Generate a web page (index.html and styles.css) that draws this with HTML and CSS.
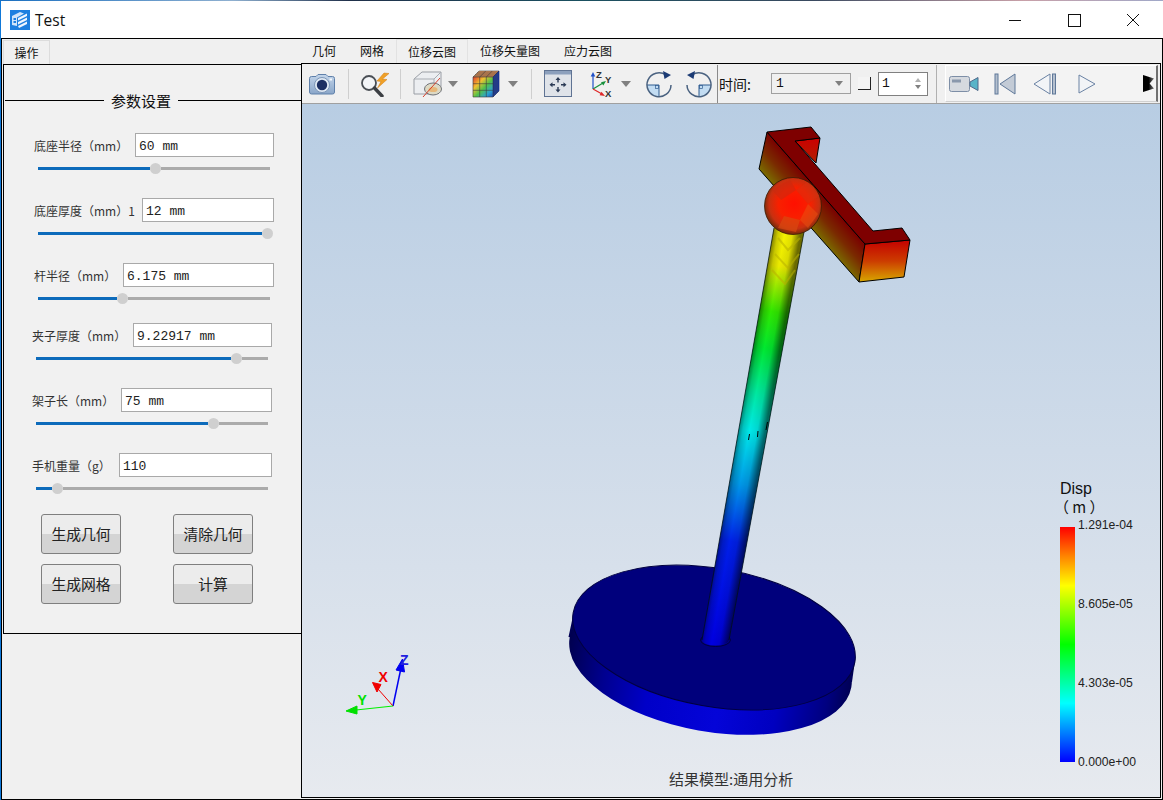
FILE: index.html
```html
<!DOCTYPE html>
<html lang="zh">
<head>
<meta charset="utf-8">
<title>Test</title>
<link rel="stylesheet" href="styles.css">
</head>
<body>
<div class="desktop-strip"></div>
<div class="window">
  <header class="titlebar">
    <svg class="app-logo" width="20" height="20" viewBox="0 0 20 20">
      <rect width="20" height="20" fill="#1c7fe0"/>
      <path d="M2 6 L10 2 L14 3.5 L7 7.5 L7 16 L2 15 Z" fill="#cfe4fa"/>
      <path d="M8 8 L17 3.5 L17 6 L8 10.5 Z M8 12 L17 7.5 L17 10 L8 14.5 Z M8 16 L17 11.5 L17 14 L9 18 Z" fill="#eef6ff"/>
      <path d="M3.5 8 H6 V10 H3.5 Z M3.5 11 H6 V13 H3.5 Z" fill="#1c7fe0"/>
    </svg>
    <span class="app-title">Test</span>
    <div class="win-controls">
      <svg width="59" height="24" viewBox="0 0 59 24"><path d="M22 12.500 H34" stroke="#111" fill="none"/></svg>
      <svg width="59" height="24" viewBox="0 0 59 24"><rect x="22.500" y="6.500" width="12" height="12" stroke="#111" fill="none"/></svg>
      <svg width="59" height="24" viewBox="0 0 59 24"><path d="M22 6 L34 18 M34 6 L22 18" stroke="#111" fill="none"/></svg>
    </div>
  </header>

  <main class="client">
    <section class="left">
      <div class="left-tabs"><div class="left-tab">操作</div></div>
      <div class="left-pane">
        <div class="group-title"><span class="rule rule-l"></span><span class="group-name">参数设置</span><span class="rule"></span></div>

        <div class="param-group group-a">
          <div class="param">
            <div class="param-line"><span class="param-label">底座半径（mm）</span><div class="field w139">60 mm</div></div>
            <div class="slider"><span class="fill" style="width:112px"></span><span class="thumb"></span><span class="rest"></span></div>
          </div>
          <div class="param">
            <div class="param-line"><span class="param-label">底座厚度（mm）</span><span class="param-extra">1</span><div class="field w132">12 mm</div></div>
            <div class="slider"><span class="fill" style="width:224px"></span><span class="thumb"></span><span class="rest"></span></div>
          </div>
          <div class="param">
            <div class="param-line"><span class="param-label">杆半径（mm）</span><div class="field w151">6.175 mm</div></div>
            <div class="slider"><span class="fill" style="width:79px"></span><span class="thumb"></span><span class="rest"></span></div>
          </div>
        </div>

        <div class="param-group group-b">
          <div class="param">
            <div class="param-line"><span class="param-label">夹子厚度（mm）</span><div class="field w139">9.22917 mm</div></div>
            <div class="slider"><span class="fill" style="width:195px"></span><span class="thumb"></span><span class="rest"></span></div>
          </div>
          <div class="param">
            <div class="param-line"><span class="param-label">架子长（mm）</span><div class="field w151">75 mm</div></div>
            <div class="slider"><span class="fill" style="width:172px"></span><span class="thumb"></span><span class="rest"></span></div>
          </div>
          <div class="param">
            <div class="param-line"><span class="param-label">手机重量（g）</span><div class="field w153">110</div></div>
            <div class="slider"><span class="fill" style="width:16px"></span><span class="thumb"></span><span class="rest"></span></div>
          </div>
        </div>

        <div class="actions">
          <button class="btn">生成几何</button>
          <button class="btn">清除几何</button>
          <button class="btn">生成网格</button>
          <button class="btn">计算</button>
        </div>
      </div>
    </section>

    <section class="right">
      <nav class="tabs">
        <span class="tab">几何</span>
        <span class="tab">网格</span>
        <span class="tab tab-active">位移云图</span>
        <span class="tab">位移矢量图</span>
        <span class="tab">应力云图</span>
      </nav>
      <div class="right-pane">
        <div class="toolbar">
          <svg class="ico m-cam" width="28" height="24" viewBox="0 0 28 24">
            <defs><linearGradient id="camB" x1="0" y1="0" x2="0" y2="1"><stop offset="0" stop-color="#c3d5ea"/><stop offset="1" stop-color="#8aa6c9"/></linearGradient></defs>
            <path d="M1.500 6.500 Q1.500 4.500 3.500 4.500 H8 L10 2.500 H18 L20 4.500 H24.500 Q26.500 4.500 26.500 6.500 V20 Q26.500 22 24.500 22 H3.500 Q1.500 22 1.500 20 Z" fill="url(#camB)" stroke="#5f80aa"/>
            <circle cx="14" cy="13" r="7.500" fill="#dfe9f4" stroke="#7e97b8"/>
            <circle cx="14" cy="13" r="5.200" fill="#1c2f63"/>
            <rect x="21.500" y="6.500" width="2.500" height="2" fill="#f4f8fc"/>
          </svg>
          <span class="sep m-s1"></span>
          <svg class="ico m-mag" width="30" height="26" viewBox="0 0 30 26">
            <circle cx="8" cy="12" r="7" fill="#f3f5f8" stroke="#4a4f55" stroke-width="1.800"/>
            <path d="M13.500 17 L21 25" stroke="#3c3f44" stroke-width="3.400" stroke-linecap="round"/>
            <path d="M23 2 L16 10 L20 10.500 L16.500 17 L26 8.500 L21.500 8 L28 2.500 Z" fill="#f0a127" stroke="#d07b10" stroke-width=".5"/>
          </svg>
          <span class="sep m-s2"></span>
          <svg class="ico m-box" width="30" height="28" viewBox="0 0 30 28">
            <path d="M1 9 L9 2 H28 V16 L22 24 H1 Z" fill="#eceef1" stroke="#9a9ea5"/>
            <path d="M1 9 H21 V24 M21 9 L28 2" fill="none" stroke="#a8acb2"/>
            <ellipse cx="20" cy="19" rx="8.500" ry="6" fill="#dcd9c5" stroke="#6f7278"/>
            <ellipse cx="20" cy="19.500" rx="4.500" ry="2.600" fill="#e6b77a"/>
            <path d="M10 27 L27 8" stroke="#d8402b"/>
          </svg>
          <span class="tri m-t1"></span>
          <svg class="ico m-cube" width="28" height="28" viewBox="0 0 28 28">
            <defs><linearGradient id="rb" x1="0" y1="0" x2="1" y2="1"><stop offset="0" stop-color="#e03a2e"/><stop offset=".3" stop-color="#f0c030"/><stop offset=".55" stop-color="#52c24a"/><stop offset=".8" stop-color="#2aa0d0"/><stop offset="1" stop-color="#2050c0"/></linearGradient></defs>
            <path d="M1 7 L7 1 H27 L21 7 Z" fill="#d88c54" stroke="#444" stroke-width=".6"/>
            <path d="M21 7 L27 1 V21 L21 27 Z" fill="#1c3ea8" stroke="#102060" stroke-width=".6"/>
            <rect x="1" y="7" width="20" height="20" fill="url(#rb)"/>
            <path d="M1 7 H21 V27 H1 Z M7.700 7 V27 M14.300 7 V27 M1 13.700 H21 M1 20.300 H21 M7.700 7 L13.700 1 M14.300 7 L20.300 1 M3 5 H23 M5 3 H25 M23 5 V25 M25 3 V23" fill="none" stroke="#3b3b3b" stroke-width=".6"/>
          </svg>
          <span class="tri m-t2"></span>
          <span class="sep m-s3"></span>
          <svg class="ico m-fit" width="28" height="27" viewBox="0 0 28 27">
            <rect x=".5" y=".5" width="27" height="26" fill="#dfe3e9" stroke="#5f7393"/>
            <rect x="1" y="1" width="26" height="3.500" fill="#8ca0bd"/>
            <path d="M14 7 L11.500 10 H13.300 V12.500 H14.700 V10 H16.500 Z M14 22.500 L11.500 19.500 H13.300 V17 H14.700 V19.500 H16.500 Z M5.500 14.700 L8.500 12.200 V14 H11 V15.400 H8.500 V17.200 Z M22.500 14.700 L19.500 12.200 V14 H17 V15.400 H19.500 V17.200 Z" fill="#2b3a55"/>
          </svg>
          <svg class="ico m-axes" width="24" height="28" viewBox="0 0 24 28">
            <path d="M4 19 V5" stroke="#2050c8" stroke-width="1.200"/><path d="M4 2 L1.700 6.500 H6.300 Z" fill="#2050c8"/>
            <path d="M4 19 L14 13" stroke="#18903c" stroke-width="1.200"/><path d="M17 11 L12 12.200 L14.300 15.500 Z" fill="#18903c"/>
            <path d="M4 19 L13 24" stroke="#e02828" stroke-width="1.200"/><path d="M16 26 L12.500 21.800 L10.600 25.200 Z" fill="#e02828"/>
            <text class="axis-mini" x="7" y="8">Z</text><text class="axis-mini" x="16" y="13">Y</text><text class="axis-mini" x="16" y="27">X</text>
          </svg>
          <span class="tri m-t3"></span>
          <svg class="ico m-rot1" width="26" height="28" viewBox="0 0 26 28">
            <path d="M13 15 V27 A12 12 0 0 1 1 15 Z" fill="#c2dcf2"/>
            <path d="M1 15 H13 V27" stroke="#2f5c90" fill="none"/>
            <rect x="9.500" y="15.500" width="3" height="3" fill="none" stroke="#2f5c90" stroke-width=".7"/>
            <path d="M20 5 A12 12 0 1 0 25 15" fill="none" stroke="#4a6280" stroke-width="1.500"/>
            <path d="M25 5 L17 1 L18.500 9 Z" fill="#1c3b74"/>
          </svg>
          <svg class="ico m-rot2" width="26" height="28" viewBox="0 0 26 28">
            <path d="M13 15 V27 A12 12 0 0 0 25 15 Z" fill="#c2dcf2"/>
            <path d="M13 27 V15 H25" stroke="#2f5c90" fill="none"/>
            <rect x="13.500" y="15.500" width="3" height="3" fill="none" stroke="#2f5c90" stroke-width=".7"/>
            <path d="M6 5 A12 12 0 1 1 1 15" fill="none" stroke="#4a6280" stroke-width="1.500"/>
            <path d="M1 5 L9 1 L7.500 9 Z" fill="#1c3b74"/>
          </svg>
          <span class="sep sep-dark m-s4"></span>
          <span class="time-label">时间:</span>
          <div class="combo"><span>1</span><span class="tri tri-sm"></span></div>
          <span class="check"></span>
          <div class="spin"><span>1</span><span class="spin-arrows"><i class="up"></i><i class="down"></i></span></div>
          <span class="sep m-s5"></span>
          <div class="player">
            <svg class="p-rec" width="30" height="18" viewBox="0 0 30 18">
              <rect x=".5" y="1.500" width="20" height="15" rx="2" fill="#d5d9df" stroke="#7d8ea6"/>
              <rect x="3" y="4.500" width="9" height="3" fill="#8a98ac"/>
              <path d="M21 7 L29 2.500 V15.500 L21 11 Z" fill="#59b4c8" stroke="#51688a"/>
            </svg>
            <svg class="p-first" width="22" height="22" viewBox="0 0 22 22">
              <rect x="1" y="1" width="3" height="20" fill="#b4bfce" stroke="#5f7899"/>
              <path d="M21 1 V21 L6 11 Z" fill="#c3cbd6" stroke="#5f7899"/>
            </svg>
            <svg class="p-back" width="24" height="22" viewBox="0 0 24 22">
              <path d="M17 1 V21 L1 11 Z" fill="#f2f4f7" stroke="#6a82a3"/>
              <rect x="19.500" y="1" width="3" height="20" fill="#b4bfce" stroke="#5f7899"/>
            </svg>
            <svg class="p-play" width="18" height="20" viewBox="0 0 18 20">
              <path d="M1 1 V19 L17 10 Z" fill="#f2f4f7" stroke="#6a82a3"/>
            </svg>
            <span class="p-more"></span>
          </div>
        </div>

        <div class="viewport">
          <svg class="scene" viewBox="302 104 858 693" width="858" height="693">
            <defs>
              <linearGradient id="wall" gradientUnits="userSpaceOnUse" x1="568" y1="0" x2="855" y2="0">
                <stop offset="0" stop-color="#000050"/><stop offset=".14" stop-color="#000090"/><stop offset=".3" stop-color="#0000c8"/><stop offset=".55" stop-color="#0404d8"/><stop offset=".75" stop-color="#0000c0"/><stop offset=".92" stop-color="#000080"/><stop offset="1" stop-color="#000050"/>
              </linearGradient>
              <linearGradient id="rodC" gradientUnits="userSpaceOnUse" x1="790" y1="230" x2="715" y2="640">
                <stop offset="0" stop-color="#f6f200"/><stop offset=".09" stop-color="#eaea00"/><stop offset=".2" stop-color="#30e800"/><stop offset=".29" stop-color="#00e830"/><stop offset=".4" stop-color="#00e8a0"/><stop offset=".49" stop-color="#00e8e8"/><stop offset=".62" stop-color="#0098e8"/><stop offset=".76" stop-color="#0020e8"/><stop offset="1" stop-color="#0000e0"/>
              </linearGradient>
              <linearGradient id="rodS" gradientUnits="userSpaceOnUse" x1="737" y1="427.500" x2="765" y2="432.500">
                <stop offset="0" stop-color="#000" stop-opacity=".55"/><stop offset=".22" stop-color="#000" stop-opacity=".16"/><stop offset=".45" stop-color="#000" stop-opacity="0"/><stop offset=".72" stop-color="#000" stop-opacity=".08"/><stop offset="1" stop-color="#000" stop-opacity=".55"/>
              </linearGradient>
              <linearGradient id="faceA" gradientUnits="userSpaceOnUse" x1="820" y1="192.500" x2="797" y2="212.500">
                <stop offset="0" stop-color="#7a0000"/><stop offset=".5" stop-color="#7a2a00"/><stop offset="1" stop-color="#7a6c00"/>
              </linearGradient>
              <linearGradient id="faceE" x1="0" y1="0" x2="0" y2="1">
                <stop offset="0" stop-color="#c40000"/><stop offset=".5" stop-color="#cc3c00"/><stop offset="1" stop-color="#d8a800"/>
              </linearGradient>
              <linearGradient id="faceI" x1="0" y1="0" x2="0" y2="1">
                <stop offset="0" stop-color="#cc0000"/><stop offset="1" stop-color="#b02000"/>
              </linearGradient>
              <radialGradient id="ball" cx=".52" cy=".46" r=".55">
                <stop offset="0" stop-color="#ff1000"/><stop offset=".5" stop-color="#f82000"/><stop offset=".8" stop-color="#c83010"/><stop offset="1" stop-color="#6a2a08"/>
              </radialGradient>
            </defs>

            <!-- base plate -->
            <path d="M573 616 L568.500 637 L852 682 L855.500 657 Z" fill="url(#wall)"/>
            <ellipse cx="710.500" cy="662.500" rx="143" ry="69" transform="rotate(10 710.500 662.500)" fill="url(#wall)"/>
            <ellipse cx="714" cy="637.500" rx="143" ry="69" transform="rotate(10 714 637.500)" fill="#00007c" stroke="#000040"/>

            <!-- rod -->
            <ellipse cx="715.500" cy="640" rx="15" ry="6.500" fill="none" stroke="#000040"/>
            <path d="M774 228 L804 232 L729 640 A13.500 5.500 0 0 1 702 640 Z" fill="url(#rodC)"/>
            <path d="M774 228 L804 232 L729 640 A13.500 5.500 0 0 1 702 640 Z" fill="url(#rodS)"/>
            <path d="M774 228 L702 640 M804 232 L729 640" stroke="#001010" stroke-opacity=".75" fill="none"/>
            <path d="M749.500 434 L748.500 440 M758 431 L757.500 437 M767.500 422 L766 430" stroke="#000" fill="none"/>
            <path d="M778 238 L788 250 L800 238 M775 254 L788 268 L799 254 M772 270 L785 284 L795 270" fill="none" stroke="#b8b000" stroke-opacity=".55" stroke-width="2"/>

            <!-- clamp -->
            <path d="M795 141 L820 138 L816 163 Z" fill="url(#faceI)" stroke="#000"/>
            <path d="M767 132 L865 244 L859 282 L759 169 Z" fill="url(#faceA)" stroke="#000"/>
            <path d="M865 244 L910 240 L904 277 L859 282 Z" fill="url(#faceE)" stroke="#000"/>
            <path d="M767 132 L811 127 L820 138 L795 141 L873 231 L902 228 L910 240 L865 244 Z" fill="#7e0000" stroke="#000"/>

            <!-- ball -->
            <circle cx="793" cy="206" r="28.500" fill="url(#ball)" stroke="#3c1a04" stroke-width=".8"/>
            <path d="M772 190 L790 180 L796 190 L781 200 Z" fill="#c82a10" fill-opacity=".55"/>
            <path d="M796 190 L807 182 L819 196 L808 204 Z" fill="#d83010" fill-opacity=".5"/>
            <path d="M784 216 L800 220 L796 232 L778 228 Z" fill="#d84810" fill-opacity=".7"/>
            <path d="M800 220 L808 204 L818 214 L808 228 Z" fill="#e85010" fill-opacity=".55"/>

            <!-- triad -->
            <path d="M393 706 L401 668" stroke="#0000f0" stroke-width="1.500"/>
            <path d="M402.500 659 L396 670 L404.500 672 Z" fill="#0000f0" stroke="#0000f0"/>
            <text class="triad" x="400" y="665" fill="#2020e0">Z</text>
            <path d="M393 706 L378 689" stroke="#f00000"/>
            <path d="M372.500 682.500 L381 684.500 L377 692 Z" fill="#f00000" stroke="#f00000"/>
            <text class="triad" x="378.500" y="682" fill="#f00000">X</text>
            <path d="M393 706 L356 710" stroke="#00f000" stroke-width="1.200"/>
            <path d="M346 711 L357 706 L357 714 Z" fill="#00e000" stroke="#00e000"/>
            <text class="triad" x="357.500" y="705" fill="#00e000">Y</text>
          </svg>

          <div class="legend">
            <div class="legend-title">Disp</div>
            <div class="legend-unit">（ m ）</div>
            <div class="legend-body">
              <div class="legend-bar"></div>
              <ul class="legend-ticks">
                <li>1.291e-04</li>
                <li>8.605e-05</li>
                <li>4.303e-05</li>
                <li>0.000e+00</li>
              </ul>
            </div>
          </div>
          <div class="caption">结果模型:通用分析</div>
        </div>
      </div>
    </section>
  </main>
</div>
</body>
</html>
```
FILE: styles.css
```css
* { box-sizing: border-box; }
html, body { margin: 0; padding: 0; }
body {
  width: 1163px;
  height: 800px;
  overflow: hidden;
  background: #f0f0f0;
  font-family: "Noto Sans CJK SC", "Noto Sans", sans-serif;
  color: #111;
}
.desktop-strip {
  height: 1px;
  background: linear-gradient(90deg, #1a6fc0 0, #8fb0d0 20%, #20304a 30%, #1a5060 50%, #3a4a60 70%, #c8a0a8 88%, #a0a8c8 100%);
}
.window {
  height: 799px;
  border-left: 1px solid #0f78d8;
  display: flex;
  flex-direction: column;
}

/* title bar */
.titlebar {
  height: 37px;
  flex: none;
  background: #fff;
  display: flex;
  align-items: center;
  padding-left: 9px;
}
.app-logo { flex: none; }
.app-title {
  margin-left: 5px;
  font: 15.500px "Open Sans", "Noto Sans", sans-serif;
  color: #111;
}
.win-controls { margin-left: auto; margin-right: -1px; display: flex; }
.win-controls svg { display: block; }

/* client */
.client {
  flex: 1;
  display: flex;
  border: 1px solid #000;
  background: #f0f0f0;
  min-height: 0;
}
.left { width: 299px; flex: none; display: flex; flex-direction: column; }
.left-tabs { height: 25px; padding: 1px 0 0 1px; flex: none; }
.left-tab {
  width: 47px;
  height: 24px;
  background: #f0f0f0;
  border: 1px solid #dcdcdc;
  border-bottom: 0;
  font-size: 12px;
  line-height: 24px;
  text-align: center;
}
.left-pane {
  margin-left: 1px;
  height: 570px;
  border: 1px solid #000;
  border-right: 0;
  background: #f1f1f1;
}

.group-title {
  display: flex;
  align-items: center;
  height: 22px;
  margin-top: 24px;
  padding-left: 1px;
}
.rule { flex: 1; height: 1px; background: #000; }
.rule-l { flex: none; width: 99px; }
.group-name { width: 74px; text-align: center; font-size: 15px; }

.param-group { display: flex; flex-direction: column; gap: 24px; width: 240px; }
.group-a { margin: 22px 0 0 30px; }
.group-b { margin: 19px 0 0 28px; }
.param { display: flex; flex-direction: column; gap: 6px; }
.param-line { display: flex; align-items: center; height: 24px; }
.param-label { font-size: 12px; color: #333; white-space: nowrap; }
.param-extra { font-size: 12px; color: #333; }
.field {
  margin-left: auto;
  height: 24px;
  flex: none;
  background: #fff;
  border: 1px solid #a9a9a9;
  padding: 2px 0 0 3px;
  font: 13px/22px "Liberation Mono", monospace;
  color: #222;
}
.w139 { width: 139px; }
.w132 { width: 132px; }
.w151 { width: 151px; }
.w153 { width: 153px; }

.slider { display: flex; align-items: center; height: 11px; margin: 0 4px; }
.fill { height: 3px; background: #0d6bbb; display: block; flex: none; }
.rest { height: 3px; background: #ababab; display: block; flex: 1; }
.thumb { width: 11px; height: 11px; border-radius: 50%; background: #cfcfcf; flex: none; display: block; }

.actions {
  display: grid;
  grid-template-columns: 80px 80px;
  grid-auto-rows: 40px;
  column-gap: 52px;
  row-gap: 10px;
  margin: 20px 0 0 37px;
}
.btn {
  padding: 0 0 2px;
  border: 1px solid #7f7f7f;
  border-radius: 3px;
  background: linear-gradient(180deg, #ececec 0, #ececec 50%, #d4d4d4 50%, #d4d4d4 100%);
  font: 14.800px "Noto Sans CJK SC", sans-serif;
  color: #222;
}

/* right */
.right { flex: 1; display: flex; flex-direction: column; min-width: 0; padding: 0 1px 1px 0; }
.tabs {
  height: 24px;
  flex: none;
  display: flex;
  font-size: 12px;
  line-height: 24px;
  margin-left: -1px;
}
.tab { padding: 0 12px; white-space: nowrap; }
.tab-active {
  padding: 0 11px;
  border: 1px solid #e2e2e2;
  border-bottom: 0;
  background: #f0f0f0;
}
.right-pane {
  flex: 1;
  border: 1px solid #000;
  display: flex;
  flex-direction: column;
  min-height: 0;
}
.toolbar {
  height: 40px;
  flex: none;
  display: flex;
  align-items: center;
  border-bottom: 1px solid #a0a0a0;
  background: #f0f0f0;
  padding-left: 6px;
}
.ico { display: block; flex: none; }
.sep { width: 1px; height: 30px; background: #cfcfcf; flex: none; }
.sep-dark { background: #8a8a8a; height: 38px; }
.m-s1 { margin-left: 12px; }
.m-mag { margin-left: 12px; }
.m-s2 { margin-left: 9px; }
.m-box { margin-left: 12px; }
.tri { width: 0; height: 0; border-style: solid; border-width: 6px 5px 0; border-color: #808080 transparent transparent; flex: none; }
.m-t1 { margin-left: 5px; }
.m-cube { margin-left: 14px; }
.m-t2 { margin-left: 8px; }
.m-s3 { margin-left: 13px; }
.m-fit { margin-left: 12px; }
.m-axes { margin-left: 17px; }
.m-t3 { margin-left: 8px; }
.m-rot1 { margin-left: 15px; }
.m-rot2 { margin-left: 14px; }
.m-s4 { margin-left: 5px; }
.axis-mini { font: 700 9.500px "Liberation Sans", sans-serif; fill: #333; }

.time-label { margin-left: 1px; width: 52px; font-size: 14px; flex: none; }
.combo {
  width: 80px; height: 21px; flex: none;
  border: 1px solid #a0a0a0;
  display: flex; align-items: center; justify-content: space-between;
  padding: 0 7px 0 4px;
  font: 13px "Liberation Mono", monospace;
  background: #f0f0f0;
}
.tri-sm { border-width: 5px 4px 0; }
.check {
  width: 13px; height: 13px; flex: none; margin-left: 7px;
  border-right: 1px solid #222; border-bottom: 1px solid #222;
  background: #f4f4f4;
}
.spin {
  width: 50px; height: 24px; flex: none; margin-left: 7px;
  background: #fff; border: 1px solid #808080;
  display: flex; align-items: center; justify-content: space-between;
  padding: 0 6px 0 3px;
  font: 13px "Liberation Mono", monospace;
}
.spin-arrows { display: flex; flex-direction: column; gap: 3px; }
.spin-arrows i { display: block; width: 0; height: 0; border-style: solid; border-color: transparent; }
.spin-arrows .up { border-width: 0 3px 4px; border-bottom-color: #b0b0b0; }
.spin-arrows .down { border-width: 4px 3px 0; border-top-color: #808080; }
.m-s5 { margin-left: 8px; height: 38px; background: #b0b0b0; }

.player {
  margin-left: 8px;
  width: 213px; height: 37px; flex: none;
  display: flex; align-items: center;
  background: #f3f3f3;
  border-top: 1px solid #fff;
  border-left: 1px solid #fff;
  border-right: 2px solid #707070;
  border-bottom: 1px solid #d0d0d0;
  padding-left: 3px;
}
.player svg { display: block; flex: none; }
.p-first { margin-left: 15px; }
.p-back { margin-left: 17px; }
.p-play { margin-left: 21px; }
.p-more {
  margin-left: 47px; width: 11px; height: 17px; flex: none;
  background: linear-gradient(90deg, #000 0, #000 50%, #777 100%);
  clip-path: polygon(0 0, 100% 20%, 60% 50%, 100% 80%, 0 100%);
}

/* viewport */
.viewport {
  position: relative;
  flex: 1;
  min-height: 0;
  overflow: hidden;
  background: linear-gradient(180deg, #b8cde3 0, #cfdbe9 50%, #e7eaef 100%);
}
.scene { display: block; position: absolute; left: 0; top: 0; }
.triad { font: 700 14px "Liberation Sans", sans-serif; }
.legend {
  position: absolute;
  left: 758px;
  top: 376px;
  color: #111;
}
.legend-title { font: 16px/18px "Liberation Sans", sans-serif; }
.legend-unit { font: 15px/17px "Noto Sans CJK SC", sans-serif; margin-left: -6px; white-space: nowrap; }
.legend-body { display: flex; margin-top: 12px; }
.legend-bar {
  width: 15px;
  height: 235px;
  background: linear-gradient(180deg, #f00 0, #ff8000 12%, #ff0 25%, #0f0 50%, #0ff 75%, #00f 100%);
}
.legend-ticks {
  list-style: none;
  margin: -10px 0 0 3px;
  padding: 0;
  height: 254px;
  display: flex;
  flex-direction: column;
  justify-content: space-between;
  font: 12.200px/17px "Liberation Sans", sans-serif;
  color: #222;
}
.caption {
  position: absolute;
  left: 367px;
  top: 665px;
  font-size: 15px;
  line-height: 20px;
  color: #333;
  white-space: nowrap;
}
```
